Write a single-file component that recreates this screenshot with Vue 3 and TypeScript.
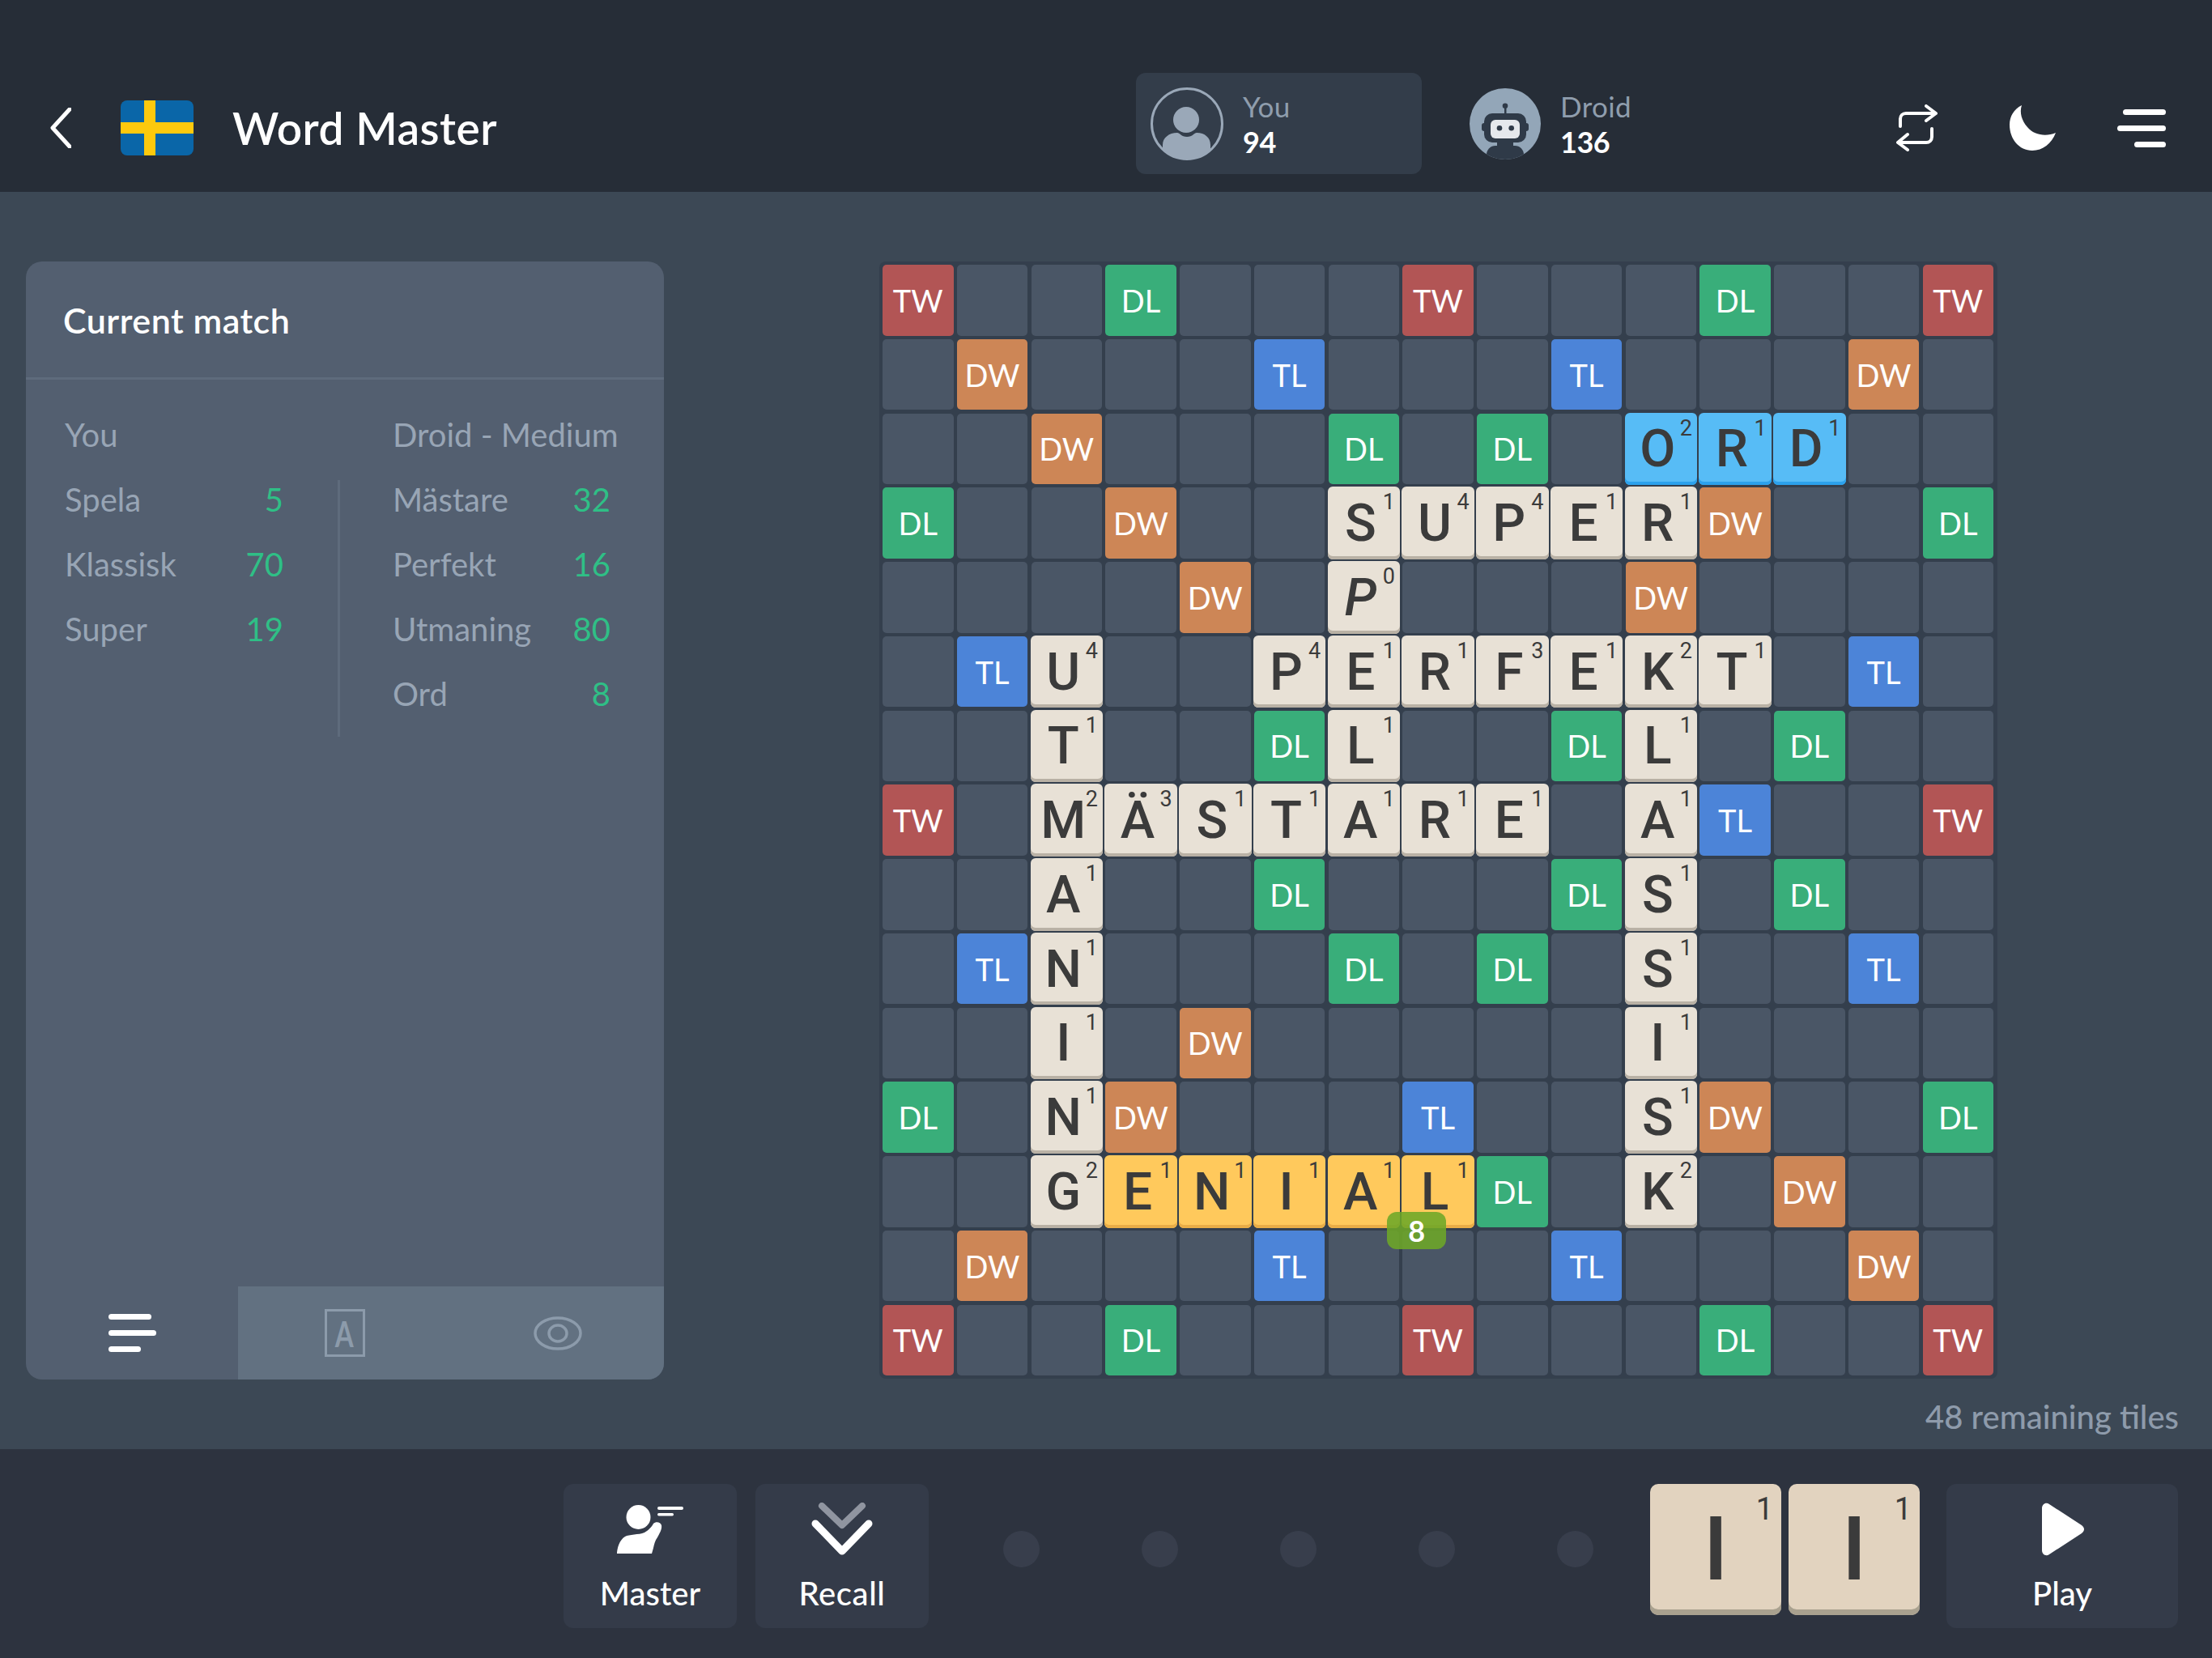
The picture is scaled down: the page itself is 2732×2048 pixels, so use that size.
<script setup lang="ts">
const prem: Record<string, string> = {
  '0,0': 'TW', '0,3': 'DL', '0,7': 'TW', '0,11': 'DL', '0,14': 'TW',
  '1,1': 'DW', '1,5': 'TL', '1,9': 'TL', '1,13': 'DW',
  '2,2': 'DW', '2,6': 'DL', '2,8': 'DL',
  '3,0': 'DL', '3,3': 'DW', '3,11': 'DW', '3,14': 'DL',
  '4,4': 'DW', '4,10': 'DW',
  '5,1': 'TL', '5,13': 'TL',
  '6,5': 'DL', '6,9': 'DL', '6,12': 'DL',
  '7,0': 'TW', '7,11': 'TL', '7,14': 'TW',
  '8,5': 'DL', '8,9': 'DL', '8,12': 'DL',
  '9,1': 'TL', '9,6': 'DL', '9,8': 'DL', '9,13': 'TL',
  '10,4': 'DW',
  '11,0': 'DL', '11,3': 'DW', '11,7': 'TL', '11,11': 'DW', '11,14': 'DL',
  '12,8': 'DL', '12,12': 'DW',
  '13,1': 'DW', '13,5': 'TL', '13,9': 'TL', '13,13': 'DW',
  '14,0': 'TW', '14,3': 'DL', '14,7': 'TW', '14,11': 'DL', '14,14': 'TW',
}

const words: [number, number, string, number[], string?][] = [
  [2, 10, 'ORD', [2, 1, 1], 'blue'],
  [3, 6, 'SUPER', [1, 4, 4, 1, 1]],
  [4, 6, 'P', [0], 'blank'],
  [5, 2, 'U', [4]],
  [5, 5, 'PERFEKT', [4, 1, 1, 3, 1, 2, 1]],
  [6, 2, 'T', [1]],
  [6, 6, 'L', [1]],
  [6, 10, 'L', [1]],
  [7, 2, 'MÄSTARE', [2, 3, 1, 1, 1, 1, 1]],
  [7, 10, 'A', [1]],
  [8, 2, 'A', [1]],
  [8, 10, 'S', [1]],
  [9, 2, 'N', [1]],
  [9, 10, 'S', [1]],
  [10, 2, 'I', [1]],
  [10, 10, 'I', [1]],
  [11, 2, 'N', [1]],
  [11, 10, 'S', [1]],
  [12, 2, 'G', [2]],
  [12, 3, 'ENIAL', [1, 1, 1, 1, 1], 'new'],
  [12, 10, 'K', [2]],
]

const placed: Record<string, { l: string; p: number; v?: string }> = {}
for (const [r, c, w, ps, v] of words) {
  Array.from(w).forEach((l, i) => {
    placed[`${r},${c + i}`] = { l, p: ps[i], v }
  })
}

const cells = Array.from({ length: 225 }, (_, i) => {
  const key = `${Math.floor(i / 15)},${i % 15}`
  return { key, tile: placed[key], prem: prem[key] }
})

const left = [
  { n: 'Spela', v: 5 },
  { n: 'Klassisk', v: 70 },
  { n: 'Super', v: 19 },
]
const right = [
  { n: 'Mästare', v: 32 },
  { n: 'Perfekt', v: 16 },
  { n: 'Utmaning', v: 80 },
  { n: 'Ord', v: 8 },
]
</script>

<template>
  <div class="app">
    <header class="top">
      <svg class="back" viewBox="0 0 26 50" width="26" height="50"><path d="M24 2 3 25l21 23" fill="none" stroke="#fff" stroke-width="5" stroke-linecap="round" stroke-linejoin="round" /></svg>
      <svg class="flag" viewBox="0 0 90 68" width="90" height="68">
        <rect width="90" height="68" rx="8" fill="#0a66a8" />
        <rect x="29" width="14" height="68" fill="#fdc90d" />
        <rect y="27" width="90" height="14" fill="#fdc90d" />
      </svg>
      <h1 class="title">Word Master</h1>
      <div class="players">
        <div class="player active">
          <svg viewBox="0 0 90 90" width="90" height="90">
            <defs><clipPath id="ac"><circle cx="45" cy="45" r="43" /></clipPath></defs>
            <circle cx="45" cy="45" r="43.5" fill="none" stroke="#9aa8b8" stroke-width="3" />
            <g clip-path="url(#ac)" fill="#9aa8b8">
              <circle cx="44" cy="40" r="16" />
              <path d="M15 92V71c0-9 8-15 18-15 3 0 5 5 12 5s9-5 12-5c10 0 17 6 17 15v21z" />
            </g>
          </svg>
          <div class="pinfo"><span class="pname">You</span><span class="pscore">94</span></div>
        </div>
        <div class="player">
          <svg viewBox="0 0 90 90" width="90" height="90">
            <defs><clipPath id="bc"><circle cx="45" cy="45" r="44" /></clipPath></defs>
            <circle cx="45" cy="45" r="44" fill="#93a6b8" />
            <g clip-path="url(#bc)" fill="#2f3a48">
              <rect x="44" y="24" width="2.500" height="9" />
              <circle cx="45" cy="22.700" r="3.300" />
              <rect x="16" y="44" width="58" height="10" rx="3" />
              <rect x="19" y="32" width="52" height="36" rx="10" />
              <rect x="27" y="40" width="36" height="23" rx="6" fill="#e5e8ec" />
              <circle cx="38" cy="50.300" r="3.300" />
              <circle cx="52.700" cy="50.300" r="3.300" />
              <rect x="35" y="66" width="20" height="8" />
              <rect x="22" y="72" width="46" height="24" rx="11" />
            </g>
          </svg>
          <div class="pinfo"><span class="pname">Droid</span><span class="pscore">136</span></div>
        </div>
      </div>
      <div class="actions">
        <svg viewBox="0 0 52 58" width="52" height="58" fill="none" stroke="#fff" stroke-width="4" stroke-linecap="round" stroke-linejoin="round">
          <path d="M5 27V18c0-4 3-7 7-7h35M37 2l12 9-12 9" />
          <path d="M44 30v10c0 4-3 7-7 7H4M14 37 2 47l12 9" />
        </svg>
        <svg viewBox="0 0 58 56" width="58" height="56"><path d="M15 0C5 5 0 14 0 24c0 18 12 32 28 32 13 0 24-9 29-22-12 5-27 3-35-7C15 19 12 9 15 0z" fill="#fff" /></svg>
        <div class="burger"><i class="b1" /><i class="b2" /><i class="b3" /></div>
      </div>
    </header>

    <main class="middle">
      <aside class="panel">
        <div class="ptitle">Current match</div>
        <div class="pbody">
          <div class="col lcol">
            <div class="chead">You</div>
            <div v-for="r in left" :key="r.n" class="row"><span>{{ r.n }}</span><b>{{ r.v }}</b></div>
          </div>
          <div class="vdiv" />
          <div class="col rcol">
            <div class="chead">Droid - Medium</div>
            <div v-for="r in right" :key="r.n" class="row"><span>{{ r.n }}</span><b>{{ r.v }}</b></div>
          </div>
        </div>
        <div class="tabs">
          <div class="tab on">
            <div class="lines"><i class="l1" /><i class="l2" /><i class="l3" /></div>
          </div>
          <div class="tab">
            <div class="abox"><span>A</span></div>
          </div>
          <div class="tab">
            <svg viewBox="0 0 60 42" width="60" height="42" fill="none" stroke="#8c9bab" stroke-width="3.5">
              <ellipse cx="30" cy="21" rx="28" ry="19" />
              <ellipse cx="30" cy="21" rx="11" ry="10" />
            </svg>
          </div>
        </div>
      </aside>

      <section class="boardwrap">
        <div class="board">
          <div v-for="c in cells" :key="c.key" class="cell" :class="c.prem">
            <template v-if="c.prem && !c.tile">{{ c.prem }}</template>
            <div v-if="c.tile" class="tile" :class="c.tile.v">
              <span class="let">{{ c.tile.l }}</span><span class="pts">{{ c.tile.p }}</span>
            </div>
            <div v-if="c.key === '12,7'" class="badge">8</div>
          </div>
        </div>
        <div class="remain">48 remaining tiles</div>
      </section>
    </main>

    <footer class="bottom">
      <div class="btn master">
        <svg viewBox="0 0 82 60" width="82" height="60" fill="#fff">
          <circle cx="26.500" cy="15" r="15" />
          <path d="M0 60c0-6 3-17 10-21 5-3 17-2 24-5 4-2 9-7 11-11 3-3 9-2 10 2 1 5-3 11-5 15-3 4-4 8-5 13l-2 7z" />
          <rect x="50" y="2" width="32" height="4" rx="2" />
          <rect x="50" y="10" width="20" height="3.500" rx="1.700" />
        </svg>
        <span>Master</span>
      </div>
      <div class="btn recall">
        <svg viewBox="0 0 76 66" width="76" height="66" fill="none" stroke-linecap="round" stroke-linejoin="round">
          <path d="M13 4l25 24L63 4" stroke="#9095a0" stroke-width="8" />
          <path d="M5 26l33 34 33-34" stroke="#fff" stroke-width="9" />
        </svg>
        <span>Recall</span>
      </div>
      <div class="dots"><i v-for="n in 5" :key="n" /></div>
      <div class="rack">
        <div class="rtile"><span class="rlet">I</span><span class="rpts">1</span></div>
        <div class="rtile"><span class="rlet">I</span><span class="rpts">1</span></div>
      </div>
      <div class="btn play">
        <svg viewBox="0 0 56 66" width="56" height="66"><path d="M3 7c0-5 5-8 9-5l40 26c4 3 4 7 0 10L12 64c-4 3-9 0-9-5z" fill="#fff" /></svg>
        <span>Play</span>
      </div>
    </footer>
  </div>
</template>

<style scoped>
.app {
  width: 2732px;
  height: 2048px;
  display: flex;
  flex-direction: column;
  font-family: Lato, "Noto Sans", sans-serif;
  background: #3c4855;
  overflow: hidden;
}
.top {
  height: 237px;
  flex: none;
  background: #262d37;
  display: flex;
  align-items: center;
  padding: 80px 57px 1px 62px;
  box-sizing: border-box;
}
.back { margin-right: 61px; }
.flag { margin-right: 48px; }
.title {
  margin: 0;
  width: 330px;
  white-space: nowrap;
  font-size: 55px;
  font-weight: 600;
  color: #fff;
  line-height: 1;
  letter-spacing: .5px;
}
.players {
  display: flex;
  margin-left: 786px;
  align-self: flex-start;
  margin-top: 10px;
  gap: 40px;
}
.player {
  width: 353px;
  height: 125px;
  box-sizing: border-box;
  display: flex;
  align-items: center;
  gap: 24px;
  padding-left: 18px;
  border-radius: 12px;
}
.player.active { background: #333d4a; }
.player + .player { width: 300px; gap: 23px; }
.pinfo { display: flex; flex-direction: column; }
.pname { font-size: 35px; color: #8f9dad; line-height: 44px; letter-spacing: .4px; }
.pscore { font-size: 36px; color: #fff; line-height: 44px; font-weight: 700; letter-spacing: -.5px; }
.actions {
  display: flex;
  align-items: center;
  margin-left: auto;
  gap: 88px;
}
.burger { display: flex; flex-direction: column; align-items: flex-end; gap: 13px; width: 60px; margin-left: -13px; }
.burger i { display: block; height: 7px; border-radius: 4px; background: #fff; }
.b1 { width: 53px; }
.b2 { width: 60px; }
.b3 { width: 39px; }

.middle {
  flex: 1;
  position: relative;
  display: flex;
  padding: 86px 41px 0 32px;
  min-height: 0;
}
.panel {
  width: 788px;
  height: 1381px;
  border-radius: 20px;
  background: #535f70;
  overflow: hidden;
  display: flex;
  flex-direction: column;
  flex: none;
}
.ptitle {
  height: 146px;
  flex: none;
  box-sizing: border-box;
  border-bottom: 3px solid #5e6b7c;
  padding: 48px 0 0 46px;
  color: #fff;
  font-size: 43px;
  font-weight: 600;
  line-height: 50px;
  letter-spacing: .5px;
}
.pbody {
  flex: 1;
  display: grid;
  grid-template-columns: 270px 71px minmax(0, 1fr);
  padding: 43px 66px 0 48px;
  min-height: 0;
  align-items: start;
}
.col { font-size: 40px; color: #98a5b5; }
.lcol { grid-column: 1; }
.rcol { grid-column: 3; padding-left: 64px; }
.chead { height: 50px; line-height: 50px; margin-bottom: 30px; white-space: nowrap; }
.row {
  display: flex;
  justify-content: space-between;
  height: 50px;
  line-height: 50px;
  margin-bottom: 30px;
}
.row b { color: #2fbf86; font-weight: 400; }
.vdiv {
  grid-column: 2;
  width: 3px;
  height: 317px;
  margin-top: 81px;
  margin-left: 67px;
  background: #5e6b7c;
}
.tabs {
  height: 115px;
  flex: none;
  display: flex;
}
.tab {
  display: flex;
  align-items: center;
  justify-content: center;
  background: #627181;
  flex: 0 0 263px;
}
.tab.on { flex: 0 0 262px; background: transparent; }
.lines { display: flex; flex-direction: column; gap: 13px; width: 59px; }
.lines i { display: block; height: 7px; border-radius: 4px; background: #fff; }
.l1 { width: 53px; }
.l2 { width: 59px; }
.l3 { width: 40px; }
.abox {
  width: 50px;
  height: 59px;
  box-sizing: border-box;
  border: 3px solid #8c9bab;
  color: #8c9bab;
  font-size: 44px;
  font-weight: 700;
  display: flex;
  align-items: center;
  justify-content: center;
  line-height: 1;
}
.abox span { display: block; transform: scaleX(.75); }

.boardwrap {
  position: absolute;
  left: 1086px;
  top: 86px;
  width: 1605px;
}
.board {
  display: grid;
  width: 1381px;
  box-sizing: border-box;
  grid-template-columns: repeat(15, 87.5px);
  grid-auto-rows: 87.5px;
  gap: 4.250px;
  padding: 4px;
  background: #343f4d;
  border-radius: 8px;
}
.cell {
  position: relative;
  border-radius: 5px;
  background: #4a5666;
  color: #fff;
  font-size: 38px;
  display: flex;
  align-items: center;
  justify-content: center;
  line-height: 1;
}
.TW { background: #b25555; }
.DW { background: #cd8656; }
.DL { background: #39ae7a; }
.TL { background: #4c84d8; }
.tile {
  position: absolute;
  inset: -1px;
  border-radius: 6px;
  background: #e8e1d6;
  box-shadow: inset 0 -4px 0 #b9b1a5;
  display: flex;
  align-items: center;
  justify-content: center;
  color: #3b3b3b;
}
.tile.new { background: #ffc95c; box-shadow: inset 0 -4px 0 #e9ad47; }
.tile.blue { background: #57bcf6; box-shadow: inset 0 -4px 0 #2ca1ec; }
.let {
  font-family: Roboto, sans-serif;
  font-size: 64px;
  font-weight: 500;
  margin: 2px 8px 0 0;
  line-height: 1;
}
.blank .let { font-style: italic; }
.pts {
  position: absolute;
  top: 6px;
  right: 6px;
  font-family: Roboto, sans-serif;
  font-size: 27px;
  line-height: 1;
}
.badge {
  position: absolute;
  z-index: 5;
  left: -19px;
  top: 69px;
  width: 73px;
  height: 46px;
  border-radius: 12px;
  background: rgba(109, 167, 40, .88);
  color: #fff;
  font-size: 36px;
  font-weight: 700;
  display: flex;
  align-items: center;
  justify-content: center;
}
.remain {
  position: absolute;
  right: 0;
  top: 1403px;
  white-space: nowrap;
  color: #8e9bab;
  font-size: 40px;
  font-weight: 500;
  line-height: 48px;
}

.bottom {
  height: 258px;
  flex: none;
  background: #2d333f;
  display: flex;
  align-items: flex-start;
  padding: 43px 41px 0 696px;
  box-sizing: border-box;
}
.btn {
  width: 214px;
  height: 178px;
  border-radius: 12px;
  background: #343b49;
  color: #fff;
  font-size: 40px;
  font-weight: 500;
  display: flex;
  flex-direction: column;
  align-items: center;
  box-sizing: border-box;
  padding-top: 23px;
  flex: none;
}
.btn svg { height: 66px; display: block; }
.btn span { line-height: 48px; margin-top: 22px; }
.master svg { margin-top: 3px; height: 60px; }
.master span { margin-top: 25px; }
.recall { margin-left: 23px; }
.recall span { letter-spacing: .6px; }
.dots {
  flex: 0 0 891px;
  width: 891px;
  display: flex;
  justify-content: center;
  gap: 126px;
  padding: 58px 21px 0 42px;
  box-sizing: border-box;
}
.dots i {
  width: 45px;
  height: 45px;
  border-radius: 50%;
  background: #383e4c;
  flex: none;
}
.rack { display: flex; gap: 9px; margin-right: 33px; }
.rtile {
  position: relative;
  width: 162px;
  height: 162px;
  border-radius: 10px;
  background: #e2d3bf;
  box-shadow: inset 0 -7px 0 #a9a18f;
  display: flex;
  align-items: center;
  justify-content: center;
  color: #3b3b3b;
}
.rlet { font-family: Roboto, sans-serif; font-size: 110px; font-weight: 500; line-height: 1; }
.rpts { position: absolute; top: 12px; right: 10px; font-family: Roboto, sans-serif; font-size: 38px; line-height: 1; }
.play { width: 286px; }
</style>
